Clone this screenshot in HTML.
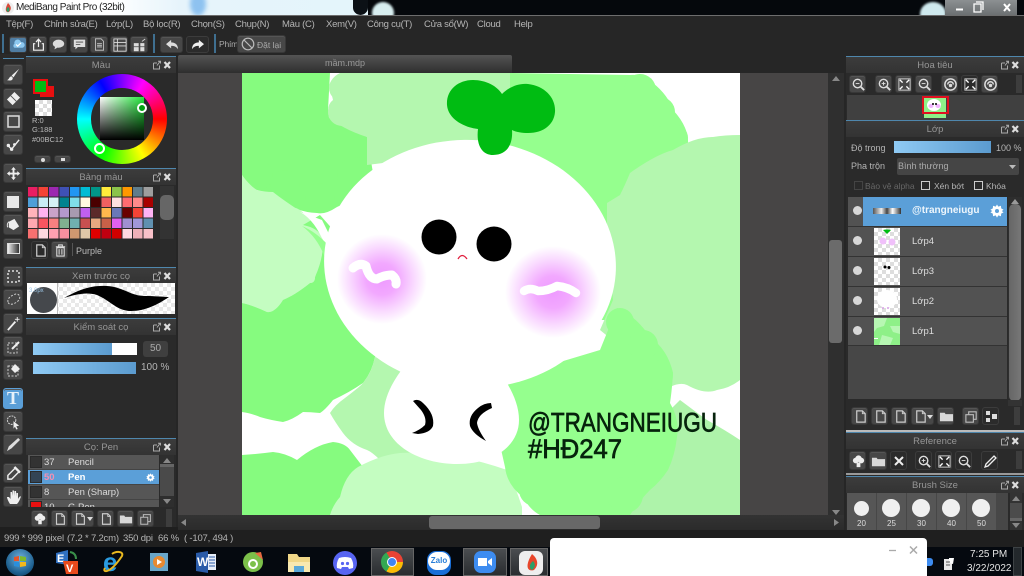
<!DOCTYPE html>
<html><head><meta charset="utf-8"><title>MediBang Paint Pro</title>
<style>
*{box-sizing:border-box}
html,body{margin:0;padding:0;width:1024px;height:576px;overflow:hidden;background:#262626;font-family:"Liberation Sans","Noto Sans CJK SC",sans-serif;color:#b5b5b5;font-size:10px}
div,span,svg{position:absolute}
svg{overflow:visible}
.t{white-space:nowrap;line-height:12px}
.m{white-space:nowrap;line-height:12px;top:19px;font-size:9.5px;letter-spacing:-.25px}
.s{white-space:nowrap;line-height:12px;top:533px;font-size:9.5px;letter-spacing:-.2px}
.pt{background:linear-gradient(#3c3c3c,#333);border-top:1px solid #4f87ad;text-align:center;line-height:18px;color:#969696;font-size:9.5px}
.pb{background:#2a2a2a}
.b{background:#474747;border:1px solid #383838;border-radius:3px;box-shadow:inset 0 1px 0 #555}
.d{background:#2b2b2b;border:1px solid #3c3c3c;border-radius:3px}
.lr{left:848px;width:159px;height:29px;background:#525252;border-bottom:1px solid #333}
.eye{left:5px;top:9px;width:9px;height:9px;border-radius:50%;background:#d8d8d8}
.th{left:26px;top:1px;width:26px;height:27px;background:repeating-conic-gradient(#ddd 0 25%,#fff 0 50%) 0 0/8px 8px}
.ln{left:64px;top:9px;color:#ddd;font-size:9.5px}
.bs{top:493px;width:29px;height:37px;background:#565656}
.bs i{position:absolute;left:6px;top:7px;width:17px;height:17px;border-radius:50%;background:#f0f0f0}
.bs b{position:absolute;left:0;width:29px;top:26px;text-align:center;font-weight:normal;font-size:8px;color:#ddd}
.row{left:28px;width:131px;height:15px;background:#565656;border-bottom:1px solid #444;color:#ddd;font-size:9.5px;line-height:15px}
.sw{left:2px;top:1px;width:12px;height:12px;background:#333;border:1px solid #2a2a2a}
</style></head><body>
<svg width="0" height="0" style="position:absolute"><defs>
<symbol id="pi" viewBox="0 0 20 10"><path d="M1.5 3H5M1.5 3V9H7.5V5.5M5 5.5L8 1.5M6 1.2H8.5V3.5" fill="none" stroke="#aaa" stroke-width="1"/><path d="M12.500 2L18 8M18 2L12.500 8" stroke="#ddd" stroke-width="2.200"/></symbol>
<symbol id="pg" viewBox="0 0 16 16"><path d="M4 2H10L13 5V14H4Z" fill="none" stroke="#ccc" stroke-width="1.300"/><path d="M10 2V5H13" fill="none" stroke="#ccc"/></symbol>
<symbol id="mg" viewBox="0 0 16 16"><circle cx="7" cy="7" r="4.500" fill="none" stroke="#ddd" stroke-width="1.500"/><path d="M10 10L14 14" stroke="#ddd" stroke-width="2"/><path d="M5 7H9" stroke="#ddd"/></symbol>
<symbol id="mp" viewBox="0 0 16 16"><circle cx="7" cy="7" r="4.500" fill="none" stroke="#ddd" stroke-width="1.500"/><path d="M10 10L14 14" stroke="#ddd" stroke-width="2"/><path d="M5 7H9M7 5V9" stroke="#ddd"/></symbol>
<symbol id="ft" viewBox="0 0 16 16"><path d="M2 2H14V14H2Z" fill="none" stroke="#ccc"/><path d="M3 3L6 6M13 3L10 6M3 13L6 10M13 13L10 10" stroke="#fff" stroke-width="1.500"/></symbol>
<symbol id="rt" viewBox="0 0 16 16"><circle cx="8" cy="8" r="6" fill="none" stroke="#ddd" stroke-width="1.600"/><path d="M5 8A3 3 0 0 1 11 8" fill="none" stroke="#ddd" stroke-width="1.600"/><circle cx="8" cy="9" r="1.800" fill="#ddd"/></symbol>
<symbol id="fo" viewBox="0 0 16 16"><path d="M1 4H6L7 5.500H15V13H1Z" fill="#d8d8d8"/></symbol>
<symbol id="cp" viewBox="0 0 16 16"><path d="M2 6H10V14H2Z M5 6V3H13V11H10" fill="none" stroke="#bbb" stroke-width="1.200"/></symbol>
<symbol id="ul" viewBox="0 0 16 16"><circle cx="5" cy="7" r="3" fill="#eee"/><circle cx="11" cy="7" r="3" fill="#eee"/><circle cx="8" cy="5" r="3.500" fill="#eee"/><path d="M6 9H10V14H6Z" fill="#eee"/></symbol>
<symbol id="gr" viewBox="0 0 16 16"><path d="M8 .5L9.500 3 12.500 2 12.800 5 15.500 6.500 13.500 8 15.500 9.500 12.800 11 12.500 14 9.500 13 8 15.500 6.500 13 3.500 14 3.200 11 .5 9.500 2.500 8 .5 6.500 3.200 5 3.500 2 6.500 3Z" fill="#fff"/><circle cx="8" cy="8" r="2.300" fill="#5b9fd8"/></symbol>
</defs></svg>

<!-- title bar -->
<div style="left:0;top:0;width:1024px;height:15px;background:#05080c"></div>
<div style="left:0;top:0;width:368px;height:15px;background:linear-gradient(90deg,#fff 0,#fff 110px,#e6f4fb 180px,#e4f5fb 360px)"></div>
<div style="left:190px;top:-8px;width:16px;height:24px;border-radius:50%;background:#8ec2f0;filter:blur(2px)"></div>
<div style="left:372px;top:2px;width:22px;height:22px;border-radius:50%;background:#d8eef0;filter:blur(1px)"></div>
<div style="left:353px;top:0;width:15px;height:15px;background:#0c1116;border-radius:0 0 8px 8px"></div>
<div style="left:920px;top:2px;width:26px;height:24px;border-radius:50%;background:#cfe9ee;filter:blur(1px)"></div>
<div style="left:0;top:15px;width:1024px;height:40px;background:#262626"></div>
<div style="left:945px;top:0;width:72px;height:15px;background:linear-gradient(#8c9092,#6c7072)"></div>
<svg style="left:950px;top:0" width="70" height="15"><path d="M6 9.500H13" stroke="#fff" stroke-width="2"/><path d="M24 4H31V12H24Z M26 2H33V10" fill="none" stroke="#fff" stroke-width="1.300"/><path d="M54 4L60 11M60 4L54 11" stroke="#fff" stroke-width="2"/></svg>
<svg style="left:1px;top:1px" width="14" height="14" viewBox="0 0 14 14"><circle cx="7" cy="7" r="6" fill="#eee"/><path d="M7 2C10 5 11 8 8 11C5 12 3 9 7 2Z" fill="#d94a3a"/><path d="M7 6C9 7 9 10 7 11C5 10 5 8 7 6Z" fill="#2a9d6a"/></svg>
<div class="t" style="left:16px;top:2px;color:#222;font-size:10px;letter-spacing:-.45px">MediBang Paint Pro (32bit)</div>
<div style="left:0;top:15px;width:1024px;height:1px;background:#6d6d6d"></div>

<!-- menu -->
<div class="m" style="left:6px">Tệp(F)</div>
<div class="m" style="left:44px">Chỉnh sửa(E)</div>
<div class="m" style="left:106px">Lớp(L)</div>
<div class="m" style="left:143px">Bộ lọc(R)</div>
<div class="m" style="left:191px">Chọn(S)</div>
<div class="m" style="left:235px">Chụp(N)</div>
<div class="m" style="left:282px">Màu (C)</div>
<div class="m" style="left:326px">Xem(V)</div>
<div class="m" style="left:367px">Công cụ(T)</div>
<div class="m" style="left:424px">Cửa sổ(W)</div>
<div class="m" style="left:477px">Cloud</div>
<div class="m" style="left:514px">Help</div>

<!-- toolbar -->
<div style="left:2px;top:34px;width:2px;height:19px;background:#3f6f90"></div>
<div class="b" style="left:9px;top:36px;width:18px;height:17px;background:#4f7da3"><svg style="left:2px;top:1px" width="13" height="13" viewBox="0 0 16 16"><path d="M3 12A3 3 0 0 1 3 7A4 4 0 0 1 11 5A3.500 3.500 0 0 1 13 12Z" fill="#8cc8f0"/><path d="M5 8L7 10 11 6" stroke="#fff" stroke-width="1.500" fill="none"/></svg></div>
<div class="b" style="left:29px;top:36px;width:18px;height:17px"><svg style="left:2px;top:1px" width="13" height="13" viewBox="0 0 16 16"><path d="M4 7H2V15H14V7H12" fill="none" stroke="#eee" stroke-width="1.500"/><path d="M8 11V2M5 5L8 1.500 11 5" fill="none" stroke="#eee" stroke-width="1.500"/></svg></div>
<div class="b" style="left:49px;top:36px;width:18px;height:17px"><svg style="left:2px;top:1px" width="13" height="13" viewBox="0 0 16 16"><ellipse cx="8" cy="7" rx="7" ry="5" fill="#ddd"/><path d="M4 10L3 14 8 11Z" fill="#ddd"/></svg></div>
<div class="b" style="left:70px;top:36px;width:18px;height:17px"><svg style="left:2px;top:1px" width="13" height="13" viewBox="0 0 16 16"><path d="M1 2H15V11H6L3 14V11H1Z" fill="#ddd"/><path d="M3.500 5H12.500M3.500 8H9" stroke="#444"/></svg></div>
<div class="b" style="left:90px;top:36px;width:18px;height:17px"><svg style="left:2px;top:1px" width="13" height="13" viewBox="0 0 16 16"><path d="M3 1H10L13 4V15H3Z" fill="none" stroke="#ccc"/><path d="M5 7H11M5 9H11M5 11H11" stroke="#ccc"/></svg></div>
<div class="b" style="left:110px;top:36px;width:18px;height:17px"><svg style="left:2px;top:1px" width="14" height="14" viewBox="0 0 16 16"><path d="M1 1H15V15H1Z M1 5H15M1 9H15M5 1V15" fill="none" stroke="#ddd"/></svg></div>
<div class="b" style="left:130px;top:36px;width:18px;height:17px"><svg style="left:2px;top:2px" width="13" height="13" viewBox="0 0 16 16"><path d="M1 5H7V9H1ZM9 5H14V9H9ZM1 10H7V15H1ZM9 10H14V15H9Z" fill="#ddd"/><path d="M11 3L15 0" stroke="#ddd"/></svg></div>
<div style="left:153px;top:34px;width:2px;height:19px;background:#3f6f90"></div>
<div class="b" style="left:160px;top:36px;width:23px;height:17px"><svg style="left:4px;top:2px" width="14" height="12" viewBox="0 0 16 14"><path d="M1 6L7 1V4C11 4 15 6 15 12C13 9 11 8 7 8V11Z" fill="#ddd"/></svg></div>
<div class="d" style="left:186px;top:36px;width:23px;height:17px"><svg style="left:4px;top:2px" width="14" height="12" viewBox="0 0 16 14"><path d="M15 6L9 1V4C5 4 1 6 1 12C3 9 5 8 9 8V11Z" fill="#eee"/></svg></div>
<div style="left:214px;top:34px;width:2px;height:19px;background:#3f6f90"></div>
<div class="t" style="left:219px;top:38px;font-size:8.5px;letter-spacing:-.2px;color:#aaa">Phím</div>
<div class="b" style="left:237px;top:35px;width:49px;height:18px"><svg style="left:3px;top:1px" width="14" height="14" viewBox="0 0 14 14"><circle cx="7" cy="7" r="5.800" fill="none" stroke="#bbb" stroke-width="1.200"/><path d="M3 3L11 11" stroke="#bbb" stroke-width="1.200"/></svg><span class="t" style="left:19px;top:3px;font-size:8.5px;color:#aaa">Đặt lại</span></div>

<!-- left tool strip -->
<div style="left:0;top:54px;width:26px;height:473px;background:#2a2a2a"></div>
<div style="left:3px;top:58px;width:21px;height:1px;background:#4f87ad"></div>
<div class="b" style="left:3px;top:64px;width:20px;height:21px"><svg style="left:2px;top:2px" width="15" height="15" viewBox="0 0 16 16"><path d="M14 2L6 9 8 11Z" fill="#eee"/><path d="M6 10C3 10 4 13 1 14C5 15 8 14 7 11Z" fill="#eee"/></svg></div>
<div class="b" style="left:3px;top:88px;width:20px;height:21px"><svg style="left:2px;top:2px" width="15" height="15" viewBox="0 0 16 16"><path d="M9 1L15 7 7 15 1 9Z" fill="#eee"/><path d="M5 5L11 11" stroke="#555"/></svg></div>
<div class="b" style="left:3px;top:111px;width:20px;height:21px"><svg style="left:3px;top:3px" width="13" height="13"><path d="M1 1H12V12H1Z" fill="none" stroke="#ddd" stroke-width="1.500"/></svg></div>
<div class="b" style="left:3px;top:134px;width:20px;height:21px"><svg style="left:2px;top:2px" width="15" height="15" viewBox="0 0 16 16"><path d="M2 9L6 13 14 3" fill="none" stroke="#eee" stroke-width="1.500"/><circle cx="2.500" cy="9" r="1.800" fill="#eee"/><circle cx="6" cy="13" r="1.800" fill="#eee"/><circle cx="9" cy="8" r="1.500" fill="#eee"/></svg></div>
<div class="b" style="left:3px;top:163px;width:20px;height:20px"><svg style="left:2px;top:2px" width="15" height="15" viewBox="0 0 16 16"><path d="M8 1L10.500 4H9V7H12V5.500L15 8 12 10.500V9H9V12H10.500L8 15 5.500 12H7V9H4V10.500L1 8 4 5.500V7H7V4H5.500Z" fill="#eee"/></svg></div>
<div class="b" style="left:3px;top:191px;width:20px;height:21px"><div style="left:3px;top:4px;width:12px;height:12px;background:#e8e8e8"></div></div>
<div class="b" style="left:3px;top:214px;width:20px;height:21px"><svg style="left:2px;top:2px" width="15" height="15" viewBox="0 0 16 16"><path d="M3 5L9 2 14 10 8 14 3 11Z" fill="#eee"/><path d="M3 5C1 7 1 10 2 11" stroke="#eee" fill="none"/></svg></div>
<div class="b" style="left:3px;top:238px;width:20px;height:21px"><div style="left:3px;top:4px;width:13px;height:11px;background:linear-gradient(90deg,#eee,#333);border:1px solid #ddd"></div></div>
<div class="b" style="left:3px;top:266px;width:20px;height:21px"><svg style="left:3px;top:3px" width="13" height="13"><path d="M1 1H12V12H1Z" fill="none" stroke="#ddd" stroke-width="1.500" stroke-dasharray="2 2"/></svg></div>
<div class="b" style="left:3px;top:289px;width:20px;height:21px"><svg style="left:2px;top:3px" width="15" height="13" viewBox="0 0 15 13"><path d="M2 9C1 5 6 2 10 1C14 1 15 5 12 8C9 11 3 13 2 9Z" fill="none" stroke="#ccc" stroke-dasharray="2 1.500"/></svg></div>
<div class="b" style="left:3px;top:313px;width:20px;height:21px"><svg style="left:2px;top:2px" width="15" height="15" viewBox="0 0 16 16"><path d="M2 15L10 6" stroke="#eee" stroke-width="2"/><path d="M12 1V6M9.500 3.500H14.500" stroke="#eee"/></svg></div>
<div class="b" style="left:3px;top:336px;width:20px;height:21px"><svg style="left:3px;top:3px" width="14" height="14" viewBox="0 0 14 14"><path d="M1 3H10V13H1Z" fill="none" stroke="#ccc" stroke-dasharray="2 1.500"/><path d="M5 9L12 2" stroke="#eee" stroke-width="2"/></svg></div>
<div class="b" style="left:3px;top:359px;width:20px;height:21px"><svg style="left:3px;top:3px" width="14" height="14" viewBox="0 0 14 14"><path d="M1 3H11V13H1Z" fill="none" stroke="#ccc" stroke-dasharray="2 1.500"/><path d="M8 1L13 6 8 10 4 6Z" fill="#eee"/></svg></div>
<div class="b" style="left:3px;top:388px;width:20px;height:21px;background:#5b9fd8;border-color:#5b9fd8"><span style="left:3px;top:-1px;font:bold 18px/21px 'Liberation Serif',serif;color:#e8f2fa">T</span></div>
<div class="b" style="left:3px;top:411px;width:20px;height:21px"><svg style="left:2px;top:2px" width="15" height="16" viewBox="0 0 16 16"><circle cx="6" cy="6" r="4.500" fill="none" stroke="#ddd" stroke-dasharray="2 1"/><path d="M8 7L14 12 11 12.500 12.500 15.500 11 16 9.500 13 8 15Z" fill="#eee"/></svg></div>
<div class="b" style="left:3px;top:434px;width:20px;height:21px"><svg style="left:2px;top:2px" width="15" height="15" viewBox="0 0 16 16"><path d="M13 1L15 3 6 12 1 15 3 10Z" fill="#ddd"/></svg></div>
<div class="b" style="left:3px;top:463px;width:20px;height:20px"><svg style="left:2px;top:2px" width="15" height="15" viewBox="0 0 16 16"><path d="M10 2L14 6 6 14H2V10Z" fill="none" stroke="#eee" stroke-width="1.500"/><path d="M9 1L15 7" stroke="#eee" stroke-width="2.500"/></svg></div>
<div class="b" style="left:3px;top:486px;width:20px;height:21px"><svg style="left:2px;top:2px" width="16" height="16" viewBox="0 0 16 16"><path d="M4 15C2 12 1 9 1 8L3 8 4.500 10V3L6 3 6.500 7V1.500H8L8.500 7V2H10L10.500 7.500V4H12V10C13 8 14 7 15 7.500 14 10 13 13 11 15Z" fill="#eee"/></svg></div>

<!-- left panels -->
<div class="pb" style="left:26px;top:56px;width:150px;height:471px"></div>
<div class="pt" style="left:26px;top:56px;width:150px;height:17px">Màu<svg style="left:126px;top:3px" width="20" height="10"><use href="#pi" width="20" height="10"/></svg></div>
<div style="left:40px;top:86px;width:14px;height:11px;background:#e81010"></div>
<div style="left:33px;top:79px;width:15px;height:15px;background:#00bc12;border:2px solid #e81010"></div>
<div style="left:35px;top:100px;width:17px;height:16px;background:repeating-conic-gradient(#ddd 0 25%,#fff 0 50%) 0 0/8px 8px"></div>
<div class="t" style="left:32px;top:116px;font-size:7.5px;line-height:9px;color:#bbb;height:20px;overflow:hidden">R:0<br>G:188<br>B:18</div>
<div class="t" style="left:32px;top:135px;font-size:7.5px;line-height:10px;background:#2a2a2a;color:#bbb">#00BC12</div>
<div class="b" style="left:34px;top:155px;width:17px;height:8px"><i style="position:absolute;left:6px;top:2px;width:4px;height:4px;background:#ddd;border-radius:50%"></i></div>
<div class="b" style="left:54px;top:155px;width:17px;height:8px"><i style="position:absolute;left:6px;top:2px;width:4px;height:3px;background:#ddd"></i></div>
<div style="left:77px;top:74px;width:90px;height:90px;border-radius:50%;background:conic-gradient(from 30deg,#f0f 0deg,#f00 60deg,#ff0 120deg,#0f0 180deg,#0ff 240deg,#00f 300deg,#f0f 360deg)"></div>
<div style="left:91px;top:88px;width:62px;height:62px;border-radius:50%;background:#2a2a2a"></div>
<div style="left:100px;top:97px;width:44px;height:43px;background:linear-gradient(transparent,#000),linear-gradient(90deg,#fff,#22e63a)"></div>
<div style="left:137px;top:103px;width:10px;height:10px;border:2px solid #fff;border-radius:50%;background:#00a010"></div>
<div style="left:94px;top:143px;width:11px;height:11px;border:2px solid #fff;border-radius:50%"></div>

<div class="pt" style="left:26px;top:168px;width:150px;height:17px">Bảng màu<svg style="left:126px;top:3px" width="20" height="10"><use href="#pi" width="20" height="10"/></svg></div>
<div style="left:28px;top:187px;width:131px;height:52px">
<svg width="131" height="52" style="left:0;top:0">
<rect x="0" y="0" width="9.500" height="9.500" fill="#e91e63"/><rect x="10.500" y="0" width="9.500" height="9.500" fill="#f44336"/><rect x="21" y="0" width="9.500" height="9.500" fill="#9c27b0"/><rect x="31.500" y="0" width="9.500" height="9.500" fill="#3f51b5"/><rect x="42" y="0" width="9.500" height="9.500" fill="#2196f3"/><rect x="52.500" y="0" width="9.500" height="9.500" fill="#00bcd4"/><rect x="63" y="0" width="9.500" height="9.500" fill="#009688"/><rect x="73.500" y="0" width="9.500" height="9.500" fill="#ffeb3b"/><rect x="84" y="0" width="9.500" height="9.500" fill="#8bc34a"/><rect x="94.500" y="0" width="9.500" height="9.500" fill="#ff9800"/><rect x="105" y="0" width="9.500" height="9.500" fill="#607d8b"/><rect x="115.500" y="0" width="9.500" height="9.500" fill="#9e9e9e"/>
<rect x="0" y="10.500" width="9.500" height="9.500" fill="#4f9fd8"/><rect x="10.500" y="10.500" width="9.500" height="9.500" fill="#c8ecf5"/><rect x="21" y="10.500" width="9.500" height="9.500" fill="#d4f1f5"/><rect x="31.500" y="10.500" width="9.500" height="9.500" fill="#00838f"/><rect x="42" y="10.500" width="9.500" height="9.500" fill="#80deea"/><rect x="52.500" y="10.500" width="9.500" height="9.500" fill="#fff8e1"/><rect x="63" y="10.500" width="9.500" height="9.500" fill="#4a0000"/><rect x="73.500" y="10.500" width="9.500" height="9.500" fill="#f06060"/><rect x="84" y="10.500" width="9.500" height="9.500" fill="#ffe0e0"/><rect x="94.500" y="10.500" width="9.500" height="9.500" fill="#ff6b70"/><rect x="105" y="10.500" width="9.500" height="9.500" fill="#ff8a8a"/><rect x="115.500" y="10.500" width="9.500" height="9.500" fill="#a80000"/>
<rect x="0" y="21" width="9.500" height="9.500" fill="#ffb3ba"/><rect x="10.500" y="21" width="9.500" height="9.500" fill="#ffb3f0"/><rect x="21" y="21" width="9.500" height="9.500" fill="#c9a3c9"/><rect x="31.500" y="21" width="9.500" height="9.500" fill="#b399cc"/><rect x="42" y="21" width="9.500" height="9.500" fill="#a89ab0"/><rect x="52.500" y="21" width="9.500" height="9.500" fill="#c060f0"/><rect x="63" y="21" width="9.500" height="9.500" fill="#5c2a2a"/><rect x="73.500" y="21" width="9.500" height="9.500" fill="#ffb74d"/><rect x="84" y="21" width="9.500" height="9.500" fill="#6a78b8"/><rect x="94.500" y="21" width="9.500" height="9.500" fill="#6a0000"/><rect x="105" y="21" width="9.500" height="9.500" fill="#f44336"/><rect x="115.500" y="21" width="9.500" height="9.500" fill="#ffb3f5"/>
<rect x="0" y="31.500" width="9.500" height="9.500" fill="#ffa8b0"/><rect x="10.500" y="31.500" width="9.500" height="9.500" fill="#f85560"/><rect x="21" y="31.500" width="9.500" height="9.500" fill="#f88080"/><rect x="31.500" y="31.500" width="9.500" height="9.500" fill="#80b090"/><rect x="42" y="31.500" width="9.500" height="9.500" fill="#70b0b0"/><rect x="52.500" y="31.500" width="9.500" height="9.500" fill="#c85050"/><rect x="63" y="31.500" width="9.500" height="9.500" fill="#e8a880"/><rect x="73.500" y="31.500" width="9.500" height="9.500" fill="#c86048"/><rect x="84" y="31.500" width="9.500" height="9.500" fill="#e060f0"/><rect x="94.500" y="31.500" width="9.500" height="9.500" fill="#a090d0"/><rect x="105" y="31.500" width="9.500" height="9.500" fill="#a098d8"/><rect x="115.500" y="31.500" width="9.500" height="9.500" fill="#6090b0"/>
<rect x="0" y="42" width="9.500" height="9.500" fill="#f87070"/><rect x="10.500" y="42" width="9.500" height="9.500" fill="#ffd8e0"/><rect x="21" y="42" width="9.500" height="9.500" fill="#ffa0b0"/><rect x="31.500" y="42" width="9.500" height="9.500" fill="#f890a0"/><rect x="42" y="42" width="9.500" height="9.500" fill="#d09870"/><rect x="52.500" y="42" width="9.500" height="9.500" fill="#e0c8a8"/><rect x="63" y="42" width="9.500" height="9.500" fill="#e00000"/><rect x="73.500" y="42" width="9.500" height="9.500" fill="#c00010"/><rect x="84" y="42" width="9.500" height="9.500" fill="#d00000"/><rect x="94.500" y="42" width="9.500" height="9.500" fill="#ffd8e0"/><rect x="105" y="42" width="9.500" height="9.500" fill="#f0b0b8"/><rect x="115.500" y="42" width="9.500" height="9.500" fill="#f8c0c8"/>
</svg></div>
<div style="left:160px;top:186px;width:14px;height:53px;background:#333"></div>
<div style="left:160px;top:195px;width:14px;height:25px;background:#666;border-radius:5px"></div>
<div class="d" style="left:31px;top:241px;width:17px;height:18px"><svg style="left:1px;top:1px" width="15" height="15"><use href="#pg" width="15" height="15"/></svg></div>
<div class="b" style="left:51px;top:241px;width:17px;height:18px"><svg style="left:2px;top:2px" width="13" height="13" viewBox="0 0 14 14"><path d="M2 3H12M5 3V1H9V3M3 4H11V13H3ZM5.500 5.500V11.500M8.500 5.500V11.500" fill="none" stroke="#ddd" stroke-width="1.100"/></svg></div>
<div style="left:72px;top:243px;width:1px;height:13px;background:#555"></div>
<div class="t" style="left:76px;top:245px;color:#bbb;font-size:9px">Purple</div>

<div class="pt" style="left:26px;top:267px;width:150px;height:17px">Xem trước cọ<svg style="left:126px;top:3px" width="20" height="10"><use href="#pi" width="20" height="10"/></svg></div>
<div style="left:27px;top:283px;width:148px;height:31px;background:repeating-conic-gradient(#e8e8e8 0 25%,#fff 0 50%) 0 0/8px 8px"></div>
<div style="left:27px;top:283px;width:31px;height:31px;background:#fff;border-right:1px solid #bbb"></div>
<div style="left:30px;top:287px;width:27px;height:26px;border-radius:50%;background:#45484c"></div>
<span class="t" style="left:29px;top:285px;font-size:6px;color:#9cc7e8">3.0px</span>
<svg style="left:27px;top:283px" width="148" height="31"><path d="M37 15C50 8 62 2 80 3C96 4 104 13 118 13C128 13 138 14 142 14C130 22 118 28 104 28C90 28 84 18 70 12C60 9 50 11 37 15Z" fill="#000"/></svg>

<div class="pt" style="left:26px;top:318px;width:150px;height:17px">Kiểm soát cọ<svg style="left:126px;top:3px" width="20" height="10"><use href="#pi" width="20" height="10"/></svg></div>
<div style="left:33px;top:343px;width:104px;height:12px;background:#fff"></div>
<div style="left:33px;top:343px;width:79px;height:12px;background:linear-gradient(90deg,#8fcaf4,#5b9bcf)"></div>
<div style="left:143px;top:341px;width:25px;height:16px;background:#3f3f3f;border-radius:3px;text-align:center;line-height:16px;color:#aaa">50</div>
<div style="left:33px;top:362px;width:103px;height:12px;background:linear-gradient(90deg,#8fcaf4,#5b9bcf)"></div>
<div class="t" style="left:141px;top:362px;font-size:10px">100 %</div>

<div class="pt" style="left:26px;top:438px;width:150px;height:17px">Cọ: Pen<svg style="left:126px;top:3px" width="20" height="10"><use href="#pi" width="20" height="10"/></svg></div>
<div style="left:28px;top:455px;width:131px;height:52px;background:#565656;overflow:hidden">
<div class="row" style="left:0;top:0"><div class="sw"></div><span style="left:16px">37</span><span style="left:40px">Pencil</span></div>
<div class="row" style="left:0;top:15px;background:#5b9fd8;color:#fff;font-weight:bold"><div class="sw" style="background:#345"></div><span style="left:16px;color:#f48fb1">50</span><span style="left:40px">Pen</span><svg style="left:118px;top:3px" width="9" height="9" viewBox="0 0 16 16"><use href="#gr" width="16" height="16"/></svg></div>
<div class="row" style="left:0;top:30px"><div class="sw"></div><span style="left:16px">8</span><span style="left:40px">Pen (Sharp)</span></div>
<div class="row" style="left:0;top:45px"><div class="sw" style="background:#e81010"></div><span style="left:16px">10</span><span style="left:40px">G Pen</span></div>
</div>
<div style="left:160px;top:455px;width:14px;height:52px;background:#2e2e2e"></div>
<div style="left:160px;top:464px;width:14px;height:32px;background:#4a4a4a;border-top:3px solid #666"></div>
<svg style="left:160px;top:455px" width="14" height="52"><path d="M3 8L7 3 11 8Z M3 44L11 44 7 49Z" fill="#888"/></svg>
<div class="b" style="left:31px;top:510px;width:17px;height:17px"><svg style="left:1px;top:1px" width="14" height="14"><use href="#ul" width="14" height="14"/></svg></div>
<div class="b" style="left:51px;top:510px;width:17px;height:17px"><svg style="left:1px;top:1px" width="14" height="14"><use href="#pg" width="14" height="14"/></svg></div>
<div class="b" style="left:71px;top:510px;width:23px;height:17px"><svg style="left:1px;top:1px" width="14" height="14"><use href="#pg" width="14" height="14"/></svg><svg style="left:15px;top:6px" width="6" height="4"><path d="M0 0H6L3 4Z" fill="#ddd"/></svg></div>
<div class="b" style="left:97px;top:510px;width:17px;height:17px"><svg style="left:1px;top:1px" width="14" height="14"><use href="#pg" width="14" height="14"/></svg></div>
<div class="b" style="left:117px;top:510px;width:17px;height:17px"><svg style="left:1px;top:1px" width="14" height="14"><use href="#fo" width="14" height="14"/></svg></div>
<div class="b" style="left:137px;top:510px;width:17px;height:17px"><svg style="left:1px;top:1px" width="14" height="14"><use href="#cp" width="14" height="14"/></svg></div>
<div style="left:166px;top:509px;width:6px;height:18px;background:#3d3d3d"></div>

<!-- canvas area -->
<div style="left:178px;top:55px;width:666px;height:18px;background:#262626"></div>
<div style="left:178px;top:55px;width:334px;height:18px;background:linear-gradient(#545454,#2e2e2e);border-radius:2px 2px 0 0;text-align:center;line-height:17px;color:#999;font-size:9px">mầm.mdp</div>
<div style="left:178px;top:73px;width:650px;height:442px;background:#474545"></div>
<div style="left:828px;top:73px;width:16px;height:457px;background:#2f2f2f"></div>
<div style="left:829px;top:240px;width:13px;height:103px;background:#6b6b6b;border-radius:3px"></div>
<svg style="left:829px;top:73px" width="14" height="445"><path d="M3 8L7 3 11 8Z M3 437H11L7 442Z" fill="#888"/></svg>
<div style="left:178px;top:515px;width:666px;height:15px;background:linear-gradient(#333,#2b2b2b)"></div>
<div style="left:429px;top:516px;width:171px;height:13px;background:#686868;border-radius:3px"></div>
<svg style="left:178px;top:515px" width="666" height="15"><path d="M8 4V11L3 7.500Z M656 4V11L661 7.500Z" fill="#888"/></svg>

<svg style="left:242px;top:73px" width="498" height="442" viewBox="242 73 498 442">
<defs>
<radialGradient id="bl"><stop offset="0" stop-color="#ee9aff"/><stop offset=".35" stop-color="#f2a8ff"/><stop offset=".7" stop-color="#f9d8ff"/><stop offset="1" stop-color="#fff"/></radialGradient>
<clipPath id="cv"><rect x="242" y="73" width="498" height="442"/></clipPath>
</defs>
<g clip-path="url(#cv)">
<rect x="242" y="73" width="498" height="442" fill="#fff"/>
<path d="M510 73L630 75Q645 74 653 83Q668 95 673 110Q687 125 688 140L690 200L640 320H520L470 150Z" fill="#95ff8e"/>
<g fill="#95ff8e"><circle cx="640" cy="90" r="16"/><circle cx="660" cy="112" r="15"/><circle cx="674" cy="138" r="14"/></g>
<path d="M242 73H330L328 110L367 137L373 173Q365 195 337 207Q325 215 317 213Q295 212 283 200Q265 192 257 190Q248 186 242 175Z" fill="#86fb7f"/>
<g fill="#86fb7f"><circle cx="355" cy="175" r="18"/><circle cx="320" cy="198" r="15"/><circle cx="285" cy="185" r="15"/><circle cx="258" cy="175" r="15"/></g>
<path d="M330 87Q330 78 340 73H510V147L367 165V137Q345 130 329 118Q326 105 333 100Z" fill="#b4f7af"/>
<g fill="#b4f7af"><circle cx="342" cy="88" r="13"/><circle cx="342" cy="112" r="14"/></g>
<path d="M740 135Q725 135 713 137Q695 137 673 150Q655 155 630 173Q625 185 620 195L607 203V240L613 300L600 330L670 387Q680 382 687 385Q705 395 717 390Q730 388 740 380Z" fill="#b4f7af"/>
<g fill="#b4f7af"><circle cx="714" cy="152" r="15"/><circle cx="688" cy="160" r="15"/><circle cx="660" cy="172" r="15"/><circle cx="640" cy="188" r="14"/><circle cx="622" cy="212" r="14"/></g>
<path d="M680 400Q700 415 707 420Q725 430 740 440V515H625L660 420Z" fill="#aef3aa"/>
<path d="M242 175Q250 186 257 190Q265 192 273 192Q283 200 303 213Q318 222 322 237Q325 255 315 277Q315 283 310 283Q295 295 283 300Q275 313 267 312Q252 305 242 303Z" fill="#c4fdc1"/>
<g fill="#c4fdc1"><circle cx="262" cy="205" r="13"/><circle cx="290" cy="225" r="18"/><circle cx="305" cy="262" r="17"/><circle cx="275" cy="295" r="16"/></g>
<path d="M303 225L320 215L360 260L385 350L375 357Q372 372 363 383Q350 392 333 400Q325 410 320 413Q310 412 303 412Q292 420 283 422Q270 420 260 417Q250 413 242 412V303Q252 305 267 312Q275 313 283 300Q295 295 310 283Q315 283 315 277Q325 255 322 237Q318 228 303 225Z" fill="#86fb7f"/>
<path d="M300 212Q315 220 325 245L332 240L322 220Z" fill="#fff"/>
<path d="M302 226Q316 232 328 245L325 258Q318 238 302 226Z" fill="#95ff8e"/>
<path d="M242 455Q258 454 273 452Q285 453 297 460Q315 445 333 442Q345 443 350 450L363 467L330 515H242Z" fill="#86fb7f"/>
<path d="M375 357L420 365L440 470L380 460Q372 452 367 450Q352 445 343 433Q335 422 330 413Q335 405 345 398Q362 385 363 383Q372 372 375 357Z" fill="#b4f7af"/>
<path d="M358 467Q380 455 400 453Q450 450 507 470Q515 485 522 507V515H330Q333 505 340 497Q345 475 358 467Z" fill="#c4fdc1"/>
<path d="M617 308Q635 315 650 337Q668 350 673 373Q672 390 670 403Q680 420 677 437Q675 455 668 470Q660 482 650 490Q640 500 630 515H540Q530 510 523 497Q507 485 505 467L490 400L510 377L600 350Z" fill="#95ff8e"/>
<g fill="#95ff8e"><circle cx="620" cy="322" r="14"/><circle cx="643" cy="345" r="15"/><circle cx="658" cy="375" r="15"/><circle cx="662" cy="425" r="15"/><circle cx="650" cy="465" r="16"/><circle cx="625" cy="495" r="18"/><circle cx="535" cy="490" r="16"/></g>
<ellipse cx="470" cy="264" rx="146" ry="124" transform="rotate(4 470 264)" fill="#fff"/>
<path d="M403 368C390 385 384 400 384 413C384 445 420 464 457 464C495 464 519 445 519 420C519 405 512 390 503 377L450 350Z" fill="#fff"/>
<ellipse cx="382" cy="279" rx="45" ry="45" fill="url(#bl)"/>
<ellipse cx="553" cy="292" rx="48" ry="46" fill="url(#bl)"/>
<path d="M447 105C446 90 458 80 473 80C486 80 497 86 502 94C510 86 520 83 528 84C545 86 556 98 555 112C554 125 543 133 528 133C522 133 516 132 512 130C513 143 508 155 493 155C482 155 476 145 478 129C462 127 448 118 447 105Z" fill="#00bc12"/>
<circle cx="439" cy="237" r="17.500" fill="#000"/>
<circle cx="494" cy="244" r="17.500" fill="#000"/>
<path d="M458 259Q462 252 467 259" fill="none" stroke="#e0203f" stroke-width="1.300"/>
<path d="M353 268Q360 262 366 266Q369 279 377 279Q384 275 392 275Q397 279 396 284" fill="none" stroke="#fff" stroke-width="9" stroke-linecap="round" stroke-linejoin="round"/>
<path d="M524 291Q530 287 538 291Q548 291 557 286Q568 287 576 293" fill="none" stroke="#fff" stroke-width="8.500" stroke-linecap="round" stroke-linejoin="round"/>
<path d="M413 401Q418 398 423 403Q435 414 433 426Q430 433 418 434L412 433Q420 430 425 425Q427 418 421 410Z" fill="#000"/>
<path d="M491 403Q484 403 478 408Q468 416 470 426Q473 434 486 441Q478 430 477 423Q478 414 492 408Z" fill="#000"/>
<text x="528" y="431.500" font-family="Liberation Sans" font-size="27" fill="#06230c" stroke="#06230c" stroke-width=".7" textLength="189" lengthAdjust="spacingAndGlyphs">@TRANGNEIUGU</text>
<text x="528" y="458" font-family="Liberation Sans" font-size="27" fill="#06230c" stroke="#06230c" stroke-width=".7" textLength="94" lengthAdjust="spacingAndGlyphs">#HĐ247</text>
</g></svg>

<!-- right panels -->
<div class="pb" style="left:846px;top:56px;width:178px;height:474px;background:#2a2a2a"></div>
<div class="pt" style="left:846px;top:56px;width:178px;height:17px">Hoa tiêu<svg style="left:154px;top:3px" width="20" height="10"><use href="#pi" width="20" height="10"/></svg></div>
<div class="b" style="left:849px;top:75px;width:17px;height:18px"><svg style="left:1px;top:1px" width="15" height="15"><use href="#mg" width="15" height="15"/></svg></div>
<div class="b" style="left:875px;top:75px;width:17px;height:18px"><svg style="left:1px;top:1px" width="15" height="15"><use href="#mp" width="15" height="15"/></svg></div>
<div class="b" style="left:895px;top:75px;width:17px;height:18px"><svg style="left:1px;top:1px" width="15" height="15"><use href="#ft" width="15" height="15"/></svg></div>
<div class="b" style="left:915px;top:75px;width:17px;height:18px"><svg style="left:1px;top:1px" width="15" height="15"><use href="#mg" width="15" height="15"/></svg></div>
<div class="b" style="left:941px;top:75px;width:17px;height:18px"><svg style="left:1px;top:1px" width="15" height="15"><use href="#rt" width="15" height="15"/></svg></div>
<div class="d" style="left:961px;top:75px;width:17px;height:18px"><svg style="left:1px;top:1px" width="15" height="15"><use href="#ft" width="15" height="15"/></svg></div>
<div class="b" style="left:981px;top:75px;width:17px;height:18px"><svg style="left:1px;top:1px" width="15" height="15"><use href="#rt" width="15" height="15"/></svg></div>
<div style="left:1016px;top:75px;width:6px;height:18px;background:#3d3d3d"></div>
<div style="left:847px;top:95px;width:177px;height:25px;background:#404040"></div>
<div style="left:924px;top:96px;width:22px;height:22px;background:#8ef088"></div>
<svg style="left:922px;top:96px" width="28" height="22"><ellipse cx="12" cy="9" rx="7" ry="6" fill="#fff"/><ellipse cx="9" cy="10" rx="2.500" ry="2" fill="#f2b4ff"/><ellipse cx="16" cy="10" rx="2.500" ry="2" fill="#f2b4ff"/><circle cx="11" cy="8" r="1" fill="#000"/><circle cx="14" cy="8" r="1" fill="#000"/><rect x="1" y="1" width="25" height="16" fill="none" stroke="#e01020" stroke-width="2"/></svg>

<div class="pt" style="left:846px;top:120px;width:178px;height:17px">Lớp<svg style="left:154px;top:3px" width="20" height="10"><use href="#pi" width="20" height="10"/></svg></div>
<div class="t" style="left:851px;top:142px;font-size:9px">Độ trong</div>
<div style="left:894px;top:141px;width:97px;height:12px;background:linear-gradient(90deg,#8fcaf4,#5b9bcf)"></div>
<div class="t" style="left:996px;top:142px;font-size:9px">100 %</div>
<div class="t" style="left:851px;top:160px;font-size:9px">Pha trộn</div>
<div style="left:897px;top:158px;width:122px;height:17px;background:#454545;border-radius:2px"><span class="t" style="left:1px;top:2px;color:#aaa;font-size:9px">Bình thường</span><svg style="left:112px;top:7px" width="7" height="4"><path d="M0 0H7L3.500 4Z" fill="#bbb"/></svg></div>
<div style="left:854px;top:181px;width:9px;height:9px;border:1px solid #444"></div>
<div class="t" style="left:865px;top:180px;color:#666;font-size:8.5px">Bảo vệ alpha</div>
<div style="left:921px;top:181px;width:9px;height:9px;border:1px solid #ccc"></div>
<div class="t" style="left:934px;top:180px;font-size:8.5px">Xén bớt</div>
<div style="left:974px;top:181px;width:9px;height:9px;border:1px solid #ccc"></div>
<div class="t" style="left:986px;top:180px;font-size:8.5px">Khóa</div>

<div style="left:848px;top:197px;width:159px;height:202px;background:#474747"></div>
<div class="lr" style="top:197px;height:30px"><div class="eye"></div><div style="left:15px;top:0;width:144px;height:29px;background:#5b9fd8"></div><div style="left:25px;top:11px;width:28px;height:6px;background:linear-gradient(90deg,#555,#eee 30%,#444 50%,#fff 70%,#333)"></div><span class="t" style="left:64px;top:8px;color:#eef6fc;font-weight:bold;font-size:10px">@trangneiugu</span><svg style="left:142px;top:7px" width="14" height="14"><use href="#gr" width="14" height="14"/></svg></div>
<div class="lr" style="top:227px;height:30px"><div class="eye"></div><div class="th"></div><svg style="left:26px;top:1px" width="26" height="27"><path d="M9 2Q13 1 17 2L13 6Z" fill="#00bc12"/><circle cx="9" cy="13" r="3.500" fill="#f0c0fa"/><circle cx="18" cy="14" r="3.500" fill="#f0c0fa"/></svg><span class="t ln">Lớp4</span></div>
<div class="lr" style="top:257px;height:30px"><div class="eye"></div><div class="th"></div><svg style="left:26px;top:1px" width="26" height="27"><circle cx="11" cy="9" r="1.500" fill="#000"/><circle cx="15" cy="9.500" r="1.500" fill="#000"/></svg><span class="t ln">Lớp3</span></div>
<div class="lr" style="top:287px;height:30px"><div class="eye"></div><div class="th"></div><svg style="left:26px;top:1px" width="26" height="27"><ellipse cx="13" cy="11" rx="10" ry="9" fill="#fff"/><circle cx="9" cy="20" r="1" fill="#d8a0e8"/><circle cx="14" cy="20" r="1" fill="#d8a0e8"/></svg><span class="t ln">Lớp2</span></div>
<div class="lr" style="top:317px"><div class="eye"></div><div class="th" style="background:#8ef088"></div><svg style="left:26px;top:1px" width="26" height="27"><path d="M0 0H13L10 8 3 10 0 14ZM16 8H26V16L19 14ZM8 17L19 20 16 27H5Z" fill="#b7f7b3"/><path d="M0 20H4V21H0Z" fill="#fff"/></svg><span class="t ln">Lớp1</span></div>
<div style="left:1008px;top:197px;width:14px;height:202px;background:#2e2e2e"></div>
<div style="left:1009px;top:204px;width:12px;height:197px;background:linear-gradient(90deg,#666,#777);border-radius:5px"></div>
<svg style="left:1008px;top:197px" width="14" height="8"><path d="M3 7L7 2 11 7Z" fill="#999"/></svg>
<div style="left:1008px;top:400px;width:14px;height:6px;background:#333"></div>

<div class="b" style="left:851px;top:407px;width:17px;height:18px"><svg style="left:1px;top:1px" width="15" height="15"><use href="#pg" width="15" height="15"/></svg></div>
<div class="b" style="left:871px;top:407px;width:17px;height:18px"><svg style="left:1px;top:1px" width="15" height="15"><use href="#pg" width="15" height="15"/></svg></div>
<div class="b" style="left:891px;top:407px;width:17px;height:18px"><svg style="left:1px;top:1px" width="15" height="15"><use href="#pg" width="15" height="15"/></svg></div>
<div class="b" style="left:911px;top:407px;width:23px;height:18px"><svg style="left:1px;top:1px" width="15" height="15"><use href="#pg" width="15" height="15"/></svg><svg style="left:15px;top:7px" width="6" height="4"><path d="M0 0H6L3 4Z" fill="#ddd"/></svg></div>
<div class="b" style="left:937px;top:407px;width:17px;height:18px"><svg style="left:1px;top:1px" width="15" height="15"><use href="#fo" width="15" height="15"/></svg></div>
<div class="b" style="left:962px;top:407px;width:17px;height:18px"><svg style="left:1px;top:1px" width="15" height="15"><use href="#cp" width="15" height="15"/></svg></div>
<div class="d" style="left:982px;top:407px;width:17px;height:18px"><svg style="left:2px;top:2px" width="13" height="13"><path d="M1 1H5V5H1ZM1 8H5V12H1ZM7 4H12V9H7Z" fill="#ddd"/></svg></div>
<div style="left:1014px;top:407px;width:6px;height:18px;background:#3d3d3d"></div>

<div style="left:846px;top:430px;width:178px;height:2px;background:#bbb"></div>
<div class="pt" style="left:846px;top:432px;width:178px;height:17px">Reference<svg style="left:154px;top:3px" width="20" height="10"><use href="#pi" width="20" height="10"/></svg></div>
<div class="b" style="left:849px;top:451px;width:17px;height:19px"><svg style="left:1px;top:2px" width="15" height="15"><use href="#ul" width="15" height="15"/></svg></div>
<div class="b" style="left:869px;top:451px;width:18px;height:19px"><svg style="left:1px;top:2px" width="15" height="15"><use href="#fo" width="15" height="15"/></svg></div>
<div class="d" style="left:890px;top:451px;width:17px;height:19px"><svg style="left:3px;top:4px" width="10" height="10"><path d="M1 1L9 9M9 1L1 9" stroke="#eee" stroke-width="2"/></svg></div>
<div class="d" style="left:915px;top:451px;width:17px;height:19px"><svg style="left:1px;top:2px" width="15" height="15"><use href="#mp" width="15" height="15"/></svg></div>
<div class="d" style="left:935px;top:451px;width:17px;height:19px"><svg style="left:1px;top:2px" width="15" height="15"><use href="#ft" width="15" height="15"/></svg></div>
<div class="d" style="left:955px;top:451px;width:17px;height:19px"><svg style="left:1px;top:2px" width="15" height="15"><use href="#mg" width="15" height="15"/></svg></div>
<div class="d" style="left:981px;top:451px;width:17px;height:19px"><svg style="left:2px;top:3px" width="13" height="13"><path d="M10 1L12 3 4 11 1 12 2 9Z" fill="none" stroke="#eee" stroke-width="1.300"/></svg></div>
<div style="left:1016px;top:451px;width:6px;height:18px;background:#3d3d3d"></div>

<div style="left:846px;top:473px;width:178px;height:2px;background:#999"></div>
<div class="pt" style="left:846px;top:476px;width:178px;height:17px">Brush Size<svg style="left:154px;top:3px" width="20" height="10"><use href="#pi" width="20" height="10"/></svg></div>
<div style="left:847px;top:493px;width:161px;height:37px;background:#474747"></div>
<div class="bs" style="left:847px"><i style="left:7px;top:8px;width:15px;height:15px"></i><b>20</b></div>
<div class="bs" style="left:877px"><i style="left:5px;top:6px;width:18px;height:18px"></i><b>25</b></div>
<div class="bs" style="left:907px"><i style="left:5px;top:6px;width:18px;height:18px"></i><b>30</b></div>
<div class="bs" style="left:937px"><i style="left:5px;top:6px;width:18px;height:18px"></i><b>40</b></div>
<div class="bs" style="left:967px"><i style="left:5px;top:6px;width:18px;height:18px"></i><b>50</b></div>
<div style="left:1010px;top:493px;width:12px;height:37px;background:#333"></div>
<div style="left:1010px;top:503px;width:12px;height:18px;background:#4c4c4c;border-bottom:3px solid #666"></div>
<svg style="left:1010px;top:493px" width="12" height="37"><path d="M2 8L6 3 10 8Z M2 30H10L6 35Z" fill="#888"/></svg>

<!-- status -->
<div style="left:0;top:527px;width:178px;height:20px;background:#1f1f1f"></div>
<div style="left:178px;top:530px;width:846px;height:17px;background:#1f1f1f"></div>
<div class="s" style="left:4px">999 * 999 pixel</div>
<div class="s" style="left:67px">(7.2 * 7.2cm)</div>
<div class="s" style="left:123px">350 dpi</div>
<div class="s" style="left:158px">66 %</div>
<div class="s" style="left:184px">( -107, 494 )</div>

<!-- taskbar -->
<div style="left:0;top:547px;width:1024px;height:29px;background:#05090f"></div>
<div style="left:6px;top:549px;width:28px;height:27px;border-radius:50%;background:radial-gradient(circle at 50% 35%,#6fb0dc,#1d5f8f 65%,#0c2f4a)"></div>
<svg style="left:13px;top:555px" width="14" height="13"><path d="M1 2L6 1V6H1Z" fill="#e8552a"/><path d="M7 1L13 2V6H7Z" fill="#7fba2c"/><path d="M1 7H6V12L1 11Z" fill="#2a8fdc"/><path d="M7 7H13V11L7 12Z" fill="#f4b81c"/></svg>
<svg style="left:54px;top:549px" width="24" height="26"><path d="M2 4L14 1V16L2 14Z" fill="#2f6fc0"/><text x="3" y="13" font-family="Liberation Sans" font-weight="bold" font-size="11" fill="#fff">E</text><path d="M9 12H24V25H12Z" fill="#e84a1c"/><text x="12" y="23" font-family="Liberation Sans" font-weight="bold" font-size="11" fill="#fff">V</text><path d="M16 3Q22 4 22 10" fill="none" stroke="#3a8f4a" stroke-width="2"/></svg>
<svg style="left:102px;top:550px" width="23" height="24" viewBox="0 0 23 24"><text x="1" y="21" font-family="Liberation Sans" font-weight="bold" font-size="26" fill="#2a9be0">e</text><path d="M3 18C0 23 8 24 20 6 22 1 14 1 10 4" fill="none" stroke="#e8b820" stroke-width="2"/></svg>
<svg style="left:149px;top:552px" width="20" height="20"><path d="M1 1H19V19H1Z" fill="#69a6c8"/><circle cx="10" cy="10" r="6" fill="#e88a30"/><path d="M8 7L13 10 8 13Z" fill="#fff"/></svg>
<svg style="left:195px;top:550px" width="22" height="24"><path d="M1 3L13 1V23L1 21Z" fill="#2a5ba8"/><path d="M13 4H21V20H13Z" fill="#e8eef8"/><path d="M14 7H20M14 10H20M14 13H20M14 16H20" stroke="#2a5ba8"/><text x="2" y="16" font-family="Liberation Sans" font-weight="bold" font-size="12" fill="#fff">W</text></svg>
<svg style="left:242px;top:551px" width="22" height="22"><circle cx="11" cy="11" r="10" fill="#7cc04a"/><circle cx="11" cy="13" r="4" fill="none" stroke="#fff" stroke-width="2"/><path d="M13 2L19 1 21 9Z" fill="#e86a40"/></svg>
<svg style="left:287px;top:553px" width="24" height="20"><path d="M1 1H10L12 4H23V19H1Z" fill="#f0d788"/><path d="M1 9H23V19H1Z" fill="#f8e8b0"/><path d="M7 13H17V19H7Z" fill="#5aa8d8"/></svg>
<div style="left:333px;top:551px;width:24px;height:24px;border-radius:50%;background:#5865f2"></div>
<svg style="left:336px;top:556px" width="18" height="14"><path d="M3 2Q9 0 15 2Q18 7 17 12L13 13 12 11H6L5 13 1 12Q0 7 3 2Z" fill="#fff"/><circle cx="6.500" cy="7.500" r="1.600" fill="#5865f2"/><circle cx="11.500" cy="7.500" r="1.600" fill="#5865f2"/></svg>
<div style="left:371px;top:548px;width:43px;height:28px;background:linear-gradient(#4a4d50,#2a2d30);border:1px solid #666"></div>
<div style="left:381px;top:551px;width:22px;height:22px;border-radius:50%;background:conic-gradient(from 330deg,#ea4335 0 120deg,#fbbc05 120deg 240deg,#34a853 240deg 360deg)"></div>
<div style="left:387px;top:557px;width:10px;height:10px;border-radius:50%;background:#4285f4;border:1.500px solid #fff"></div>
<div style="left:427px;top:551px;width:24px;height:24px;border-radius:9px;background:#1a6fd8"></div>
<div style="left:428px;top:552px;width:22px;height:18px;border-radius:9px;background:#fff;text-align:center;font:bold 8px/18px 'Liberation Sans',sans-serif;color:#2a7fd8">Zalo</div>
<div style="left:463px;top:548px;width:44px;height:28px;background:linear-gradient(#4a4d50,#2a2d30);border:1px solid #666"></div>
<div style="left:474px;top:551px;width:22px;height:22px;border-radius:7px;background:#3d8cf0"></div>
<svg style="left:477px;top:556px" width="16" height="12"><path d="M1 2H10V10H1ZM11 5L15 2V10L11 7Z" fill="#fff"/></svg>
<div style="left:510px;top:548px;width:38px;height:28px;background:linear-gradient(#4a4d50,#2a2d30);border:1px solid #666"></div>
<div style="left:519px;top:551px;width:24px;height:24px;border-radius:6px;background:#eee"></div>
<svg style="left:522px;top:553px" width="18" height="20"><path d="M10 1C16 6 17 12 12 17C6 19 2 14 10 1Z" fill="#e8452a"/><path d="M11 8C14 11 13 15 10 17C7 16 7 11 11 8Z" fill="#2aa068"/></svg>
<div style="left:550px;top:538px;width:377px;height:38px;background:#fff;border-radius:4px 4px 0 0"></div>
<svg style="left:885px;top:544px" width="36" height="12"><path d="M4 6.500H11" stroke="#aaa" stroke-width="1.300"/><path d="M25 2.500L32 9.500M32 2.500L25 9.500" stroke="#aaa" stroke-width="1.500"/></svg>
<div style="left:927px;top:558px;width:6px;height:8px;background:#3d8cf0;border-radius:0 3px 3px 0"></div>
<svg style="left:943px;top:557px" width="12" height="14"><path d="M1 2H9V13H1Z" fill="#e8e8e8"/><path d="M6 1L11 1 10 7 6 6Z" fill="#fff"/><path d="M3 5H7M3 8H7" stroke="#555"/></svg>
<div class="t" style="left:970px;top:549px;color:#e4e4e4;font-size:10px">7:25 PM</div>
<div class="t" style="left:967px;top:563px;color:#e4e4e4;font-size:10px">3/22/2022</div>
<div style="left:1013px;top:547px;width:9px;height:29px;background:#23282c;border:1px solid #3d4245"></div>
</body></html>
